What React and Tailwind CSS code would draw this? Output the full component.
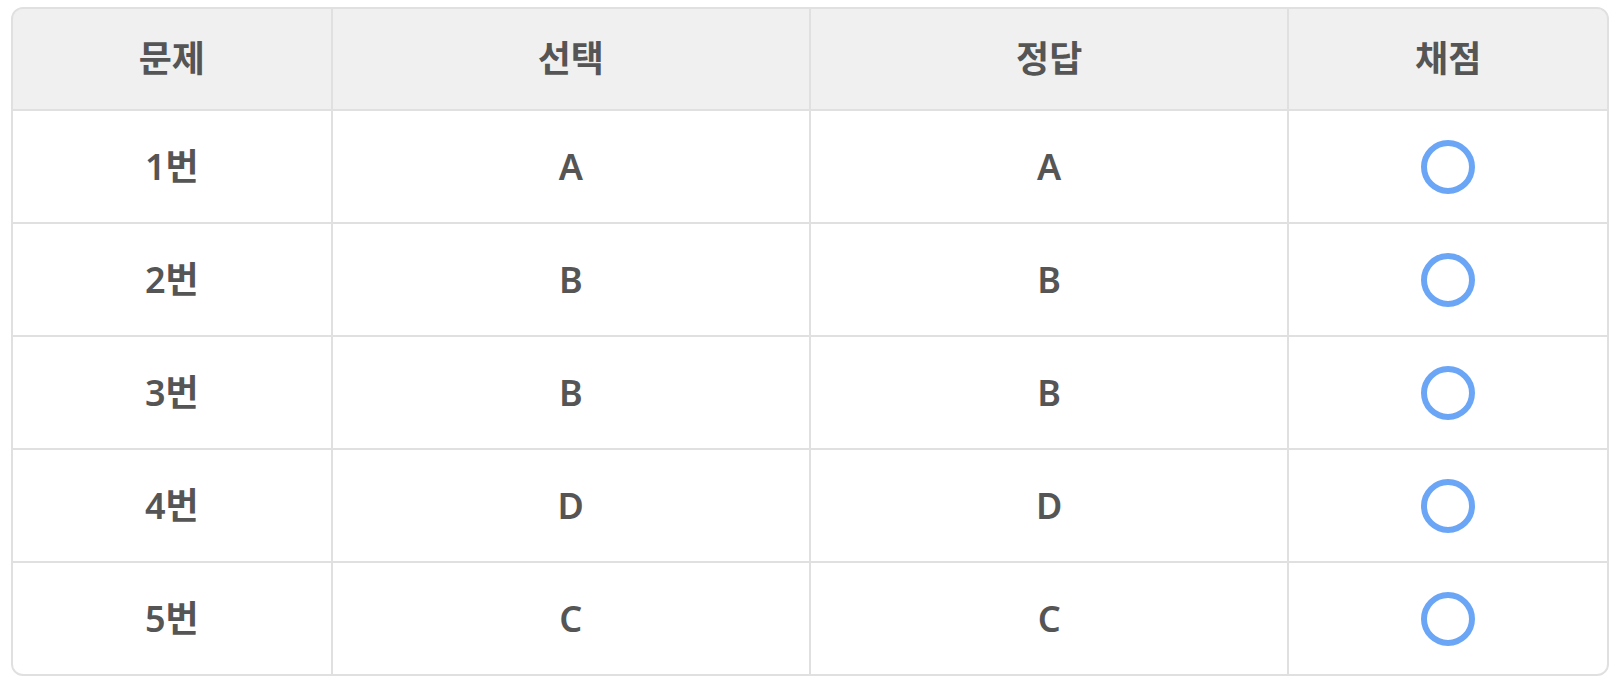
import React from 'react';

const rows = [
  { no: '1번', pick: 'A', answer: 'A' },
  { no: '2번', pick: 'B', answer: 'B' },
  { no: '3번', pick: 'B', answer: 'B' },
  { no: '4번', pick: 'D', answer: 'D' },
  { no: '5번', pick: 'C', answer: 'C' },
];

const font = { fontFamily: '"Noto Sans", "Noto Sans CJK KR", sans-serif' };

function Cell({ children, head }) {
  return (
    <div
      className={`flex items-center justify-center text-[36px] leading-none font-semibold text-[#555555] ${
        head ? 'h-[100px] bg-[#f0f0f0]' : 'h-[111px] bg-white'
      }`}
    >
      {children}
    </div>
  );
}

export default function App() {
  return (
    <div className="min-h-screen bg-white pt-[7px] pl-[11px] pr-[10px]" style={font}>
      <div className="rounded-xl border-2 border-[#e0e0e0] overflow-hidden">
        <div className="grid grid-cols-[2fr_3fr_3fr_2fr] gap-[2px] bg-[#e0e0e0]">
          {/* Header */}
          <Cell head>문제</Cell>
          <Cell head>선택</Cell>
          <Cell head>정답</Cell>
          <Cell head>채점</Cell>

          {/* Rows */}
          {rows.map((row) => (
            <React.Fragment key={row.no}>
              <Cell>{row.no}</Cell>
              <Cell>{row.pick}</Cell>
              <Cell>{row.answer}</Cell>
              <Cell>
                <div className="w-[54px] h-[54px] rounded-full border-[6px] border-[#6ba6f6]" />
              </Cell>
            </React.Fragment>
          ))}
        </div>
      </div>
    </div>
  );
}
